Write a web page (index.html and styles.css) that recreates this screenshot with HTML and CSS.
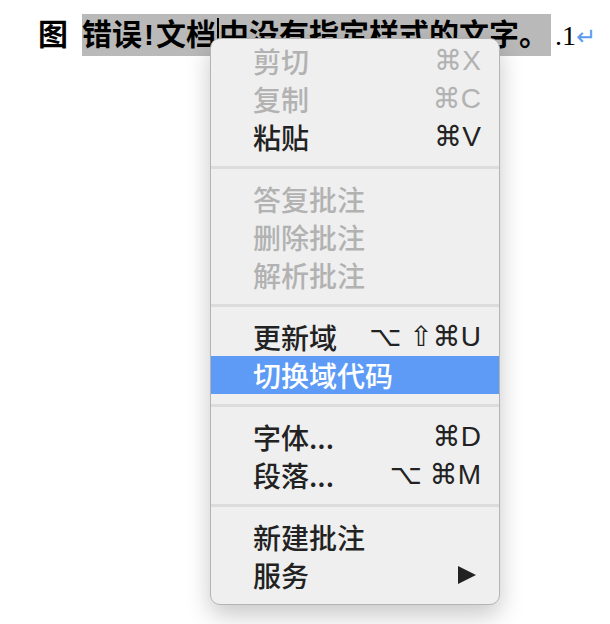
FILE: index.html
```html
<!DOCTYPE html>
<html lang="zh">
<head>
<meta charset="utf-8">
<link rel="stylesheet" href="styles.css">
</head>
<body>
<div class="page">
  <p class="caption"><span class="label">图</span><span class="sel">错误<span class="bang">!</span>文档<span class="caret"></span>中没有指定样式的文字。</span><span class="num">.1</span><span class="ret">↵</span></p>
</div>
<div class="menu">
  <div class="item disabled"><span class="t">剪切</span><span class="k">⌘X</span></div>
  <div class="item disabled"><span class="t">复制</span><span class="k">⌘C</span></div>
  <div class="item"><span class="t">粘贴</span><span class="k">⌘V</span></div>
  <div class="sep"></div>
  <div class="item disabled"><span class="t">答复批注</span></div>
  <div class="item disabled"><span class="t">删除批注</span></div>
  <div class="item disabled"><span class="t">解析批注</span></div>
  <div class="sep"></div>
  <div class="item"><span class="t">更新域</span><span class="k">⌥ ⇧⌘U</span></div>
  <div class="item active"><span class="t">切换域代码</span></div>
  <div class="sep"></div>
  <div class="item"><span class="t">字体...</span><span class="k">⌘D</span></div>
  <div class="item"><span class="t">段落...</span><span class="k">⌥ ⌘M</span></div>
  <div class="sep"></div>
  <div class="item"><span class="t">新建批注</span></div>
  <div class="item"><span class="t">服务</span><span class="arrow"></span></div>
</div>
</body>
</html>
```
FILE: styles.css
```css
html, body {
  margin: 0;
  padding: 0;
  background: #ffffff;
}
body {
  width: 610px;
  height: 624px;
  position: relative;
  overflow: hidden;
}
.page {
  padding: 14px 0 0 38px;
}
.caption {
  margin: 0;
  font-family: "Liberation Sans", "Noto Sans CJK SC", sans-serif;
  font-weight: bold;
  font-size: 30px;
  line-height: 42px;
  color: #000;
  white-space: nowrap;
}
.label {
  margin-right: 14px;
}
.sel {
  background: #b9b9b9;
  display: inline-block;
  padding-right: 2px;
}
.bang {
  margin: 0 2px;
}
.caret {
  display: inline-block;
  width: 2px;
  height: 32px;
  background: #000;
  vertical-align: -5px;
  margin: 0 0 0 1px;
}
.num {
  font-family: "Liberation Serif", serif;
  font-weight: normal;
  font-size: 28px;
  margin-left: 4px;
}
.ret {
  font-family: "DejaVu Sans", sans-serif;
  font-weight: normal;
  font-size: 24px;
  color: #5b9cf0;
}
.menu {
  position: absolute;
  left: 210px;
  top: 38px;
  width: 288px;
  padding: 3px 0 10px;
  background: #efefef;
  border: 1px solid #b4b4b4;
  border-radius: 10px;
  box-shadow: 0 10px 24px rgba(0, 0, 0, 0.22);
  font-family: "Noto Sans CJK SC", "Liberation Sans", sans-serif;
  font-size: 28px;
  font-weight: 500;
  color: #222222;
}
.item {
  height: 38px;
  display: flex;
  align-items: center;
  justify-content: space-between;
  padding: 0 18px 0 42px;
  white-space: nowrap;
}
.item .t {
  line-height: 38px;
}
.item .k {
  font-family: "Liberation Sans", "DejaVu Sans", sans-serif;
  font-size: 28px;
  line-height: 38px;
}
.disabled {
  color: #b2b2b2;
}
.active {
  background: #5d9bf6;
  color: #ffffff;
}
.sep {
  height: 3px;
  background: #dcdcdc;
  margin: 10px 0 11px;
}
.arrow {
  width: 0;
  height: 0;
  border-top: 9px solid transparent;
  border-bottom: 9px solid transparent;
  border-left: 18px solid #222222;
  margin-right: 5px;
}
```
